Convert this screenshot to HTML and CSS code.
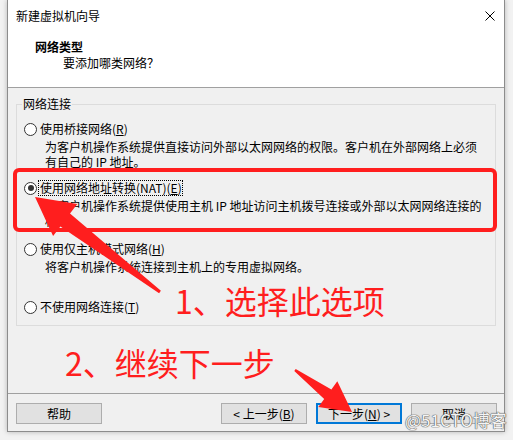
FILE: index.html
```html
<!DOCTYPE html>
<html>
<head>
    <meta charset="utf-8">
    <title>新建虚拟机向导</title>
    <link rel="stylesheet" href="styles.css">
</head>
<body>
    <div class="window">
        <div class="top">
            <div class="titlebar">
                <span class="title">新建虚拟机向导</span>
                <svg class="close" width="10" height="10" viewBox="0 0 10 10">
                    <path d="M0.5 0.5 L9.5 9.5 M9.5 0.5 L0.5 9.5" stroke="#000" stroke-width="1"/>
                </svg>
            </div>
            <div class="page-head">
                <div class="page-title">网络类型</div>
                <div class="page-sub">要添加哪类网络？</div>
            </div>
        </div>

        <div class="content">
            <fieldset class="group">
                <legend>网络连接</legend>

                <div class="option">
                    <div class="row"><span class="radio"></span><span class="label">使用桥接网络(<u>R</u>)</span></div>
                    <div class="desc">为客户机操作系统提供直接访问外部以太网网络的权限。客户机在外部网络上必须<br>有自己的 IP 地址。</div>
                </div>

                <div class="option">
                    <div class="row"><span class="radio checked"></span><span class="label focused">使用网络地址转换(NAT)(<u>E</u>)</span></div>
                    <div class="desc">为客户机操作系统提供使用主机 IP 地址访问主机拨号连接或外部以太网网络连接的<br>权限。</div>
                </div>

                <div class="option option-host">
                    <div class="row"><span class="radio"></span><span class="label">使用仅主机模式网络(<u>H</u>)</span></div>
                    <div class="desc">将客户机操作系统连接到主机上的专用虚拟网络。</div>
                </div>

                <div class="option option-last">
                    <div class="row"><span class="radio"></span><span class="label">不使用网络连接(<u>T</u>)</span></div>
                </div>
            </fieldset>
        </div>

        <div class="footer">
            <button class="btn">帮助</button>
            <div class="spacer"></div>
            <button class="btn">&lt; 上一步(<u>B</u>)</button>
            <button class="btn btn-default">下一步(<u>N</u>) &gt;</button>
            <button class="btn">取消</button>
        </div>
    </div>

    <!-- annotations drawn over the screenshot -->
    <svg class="marks" width="513" height="440" viewBox="0 0 513 440">
        <rect x="15" y="170" width="480" height="60" rx="4" fill="none" stroke="#ff1e1e" stroke-width="4"/>
        <polygon fill="#ff1e1e" points="35,197 77.3,204.1 70,213.6 160.9,290.8 159.1,293.2 60.4,226.4 53.1,235.9"/>
        <polygon fill="#ff1e1e" points="352,412 318.3,407.1 324.2,399 294.3,371 295.7,369 331.4,389.4 337.3,381.3"/>
    </svg>
    <div class="note note-1">1、选择此选项</div>
    <div class="note note-2">2、继续下一步</div>
    <div class="watermark">@51CTO博客</div>
</body>
</html>
```

FILE: styles.css
```css
:root {
    --face: #f0f0f0;
    --line: #a0a0a0;
    --group-line: #dcdcdc;
    --btn-bg: #e1e1e1;
    --btn-border: #adadad;
    --accent: #0078d7;
    --mark: #ff1e1e;
}

body {
    margin: 0;
    width: 513px;
    height: 440px;
    overflow: hidden;
    background-color: #f2f2f2;
    font-family: "Noto Sans CJK SC", sans-serif;
    font-size: 12px;
    color: #000;
    position: relative;
}

.window {
    margin-left: 7px;
    width: 496px;
    height: 431px;
    border: 1px solid #8c8c8c;
    border-top: none;
    background-color: var(--face);
    box-shadow: 0 0 5px rgba(0, 0, 0, 0.25);
    display: flex;
    flex-direction: column;
}

.top {
    height: 87px;
    background-color: #fff;
    border-bottom: 1px solid var(--line);
}

.titlebar {
    height: 31px;
    padding: 0 9px 0 8px;
    display: flex;
    justify-content: space-between;
    align-items: center;
}

.title {
    line-height: 16px;
}

.page-head {
    padding: 8px 0 0 27px;
}

.page-title {
    font-weight: bold;
    line-height: 16px;
}

.page-sub {
    margin-left: 28px;
    line-height: 16px;
}

.content {
    flex: 1;
    padding: 8px 8px 0 8px;
}

.group {
    margin: 0;
    padding: 9px 6px 10px 5px;
    border: 1px solid var(--group-line);
}

.group legend {
    padding: 0 1px;
    line-height: 16px;
}

.option {
    height: 59px;
    margin-left: 2px;
}

.option-host {
    height: 58px;
    margin-top: 2px;
}

.option-last {
    height: auto;
}

.row {
    display: flex;
    align-items: center;
    height: 16px;
}

.radio {
    width: 11px;
    height: 11px;
    border: 1px solid #333;
    border-radius: 50%;
    background-color: #fff;
    margin-right: 3px;
    display: flex;
    align-items: center;
    justify-content: center;
    flex-shrink: 0;
}

.radio.checked::after {
    content: "";
    width: 6px;
    height: 6px;
    border-radius: 50%;
    background-color: #333;
}

.label {
    line-height: 14px;
    white-space: nowrap;
}

.label.focused {
    outline: 1px dotted #000;
    outline-offset: 0;
    margin-left: -1px;
    padding-left: 1px;
}

.desc {
    margin-top: 2px;
    padding-left: 21px;
    line-height: 15px;
    white-space: nowrap;
}

.footer {
    height: 38px;
    border-top: 1px solid var(--line);
    padding: 9px 7px 0 8px;
    box-sizing: border-box;
    display: flex;
    align-items: flex-start;
    gap: 9px;
}

.spacer {
    flex: 1;
}

.btn {
    width: 86px;
    height: 21px;
    padding: 0;
    border: 1px solid var(--btn-border);
    background-color: var(--btn-bg);
    font-family: inherit;
    font-size: 12px;
    line-height: 16px;
    color: #000;
}

.btn-default {
    border: 2px solid var(--accent);
}

.marks {
    position: absolute;
    left: 0;
    top: 0;
    pointer-events: none;
}

.note {
    position: absolute;
    color: var(--mark);
    font-size: 32px;
    line-height: 32px;
    white-space: nowrap;
}

.note-1 {
    left: 175px;
    top: 284px;
}

.note-2 {
    left: 65px;
    top: 346px;
}

.watermark {
    position: absolute;
    left: 405px;
    top: 409px;
    font-size: 17px;
    line-height: 22px;
    color: #f4f4f4;
    text-shadow: 0 0 1px #555, 0 0 1px #555, 0 0 1px #666;
    white-space: nowrap;
}
```
